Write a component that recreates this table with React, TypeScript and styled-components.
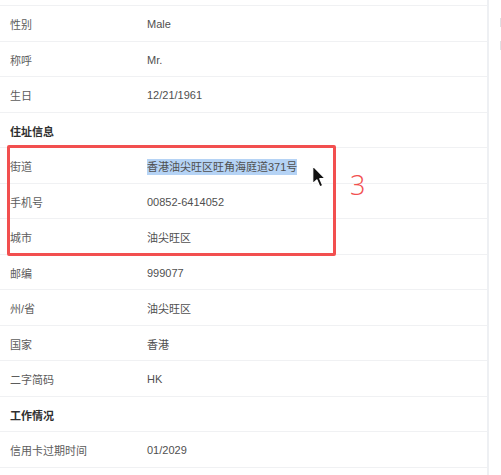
import * as React from 'react'
import styled, { createGlobalStyle } from 'styled-components'

type Row = {
  label: string
  value?: string
  header?: boolean
  selected?: boolean
}

const rows: Row[] = [
  { label: '性别', value: 'Male' },
  { label: '称呼', value: 'Mr.' },
  { label: '生日', value: '12/21/1961' },
  { label: '住址信息', header: true },
  { label: '街道', value: '香港油尖旺区旺角海庭道371号', selected: true },
  { label: '手机号', value: '00852-6414052' },
  { label: '城市', value: '油尖旺区' },
  { label: '邮编', value: '999077' },
  { label: '州/省', value: '油尖旺区' },
  { label: '国家', value: '香港' },
  { label: '二字简码', value: 'HK' },
  { label: '工作情况', header: true },
  { label: '信用卡过期时间', value: '01/2029' },
]

const GlobalStyle = createGlobalStyle`
  html, body {
    margin: 0;
    padding: 0;
    background: #fff;
    overflow: hidden;
  }
  body {
    font-family: "Liberation Sans", "Noto Sans CJK SC", sans-serif;
  }
`

const Page = styled.div`
  display: flex;
  width: 501px;
  height: 475px;
  overflow: hidden;
`

const Table = styled.div`
  position: relative;
  width: 487px;
  flex: none;
  border-right: 2px solid #eef0f3;
`

const TopEdge = styled.div`
  height: 5px;
  border-bottom: 1px solid #f0f1f3;
`

const RowBox = styled.div`
  display: flex;
  align-items: center;
  height: 35.5px;
  box-sizing: border-box;
  border-bottom: 1px solid #f0f1f3;
  padding: 2px 0 0 10px;
`

const Label = styled.div<{ $header?: boolean }>`
  width: 137px;
  flex: none;
  font-size: 11px;
  font-weight: ${(p) => (p.$header ? 700 : 400)};
  color: ${(p) => (p.$header ? '#2f2f2f' : '#5c5c5c')};
`

const Value = styled.div`
  font-size: 11px;
  color: #4f4f4f;
`

const Selected = styled.span`
  background: #b5d3f5;
  padding: 2px 0;
`

const Highlight = styled.div`
  position: absolute;
  left: 7px;
  top: 145px;
  width: 329px;
  height: 111px;
  box-sizing: border-box;
  border: 3px solid #f24f4f;
  border-radius: 2px;
`

const StepNumber = styled.div`
  position: absolute;
  left: 350px;
  top: 168px;
  font-family: "Open Sans", sans-serif;
  font-weight: 300;
  font-size: 27px;
  line-height: 34px;
  color: #f24f4f;
`

const Cursor = styled.svg`
  position: absolute;
  left: 311px;
  top: 164px;
`

const SideStrip = styled.div`
  flex: 1;
  display: flex;
  flex-direction: column;
  gap: 14px;
  padding: 18px 0 0 11px;
`

const SideMark = styled.div`
  width: 2px;
  height: 9px;
  background: #dfe1e4;
`

export default function App() {
  return (
    <Page>
      <GlobalStyle />
      <Table>
        <TopEdge />
        {rows.map((r) => (
          <RowBox key={r.label}>
            <Label $header={r.header}>{r.label}</Label>
            {r.value && (
              <Value>{r.selected ? <Selected>{r.value}</Selected> : r.value}</Value>
            )}
          </RowBox>
        ))}
        <Highlight />
        <StepNumber>3</StepNumber>
        <Cursor width="16" height="26" viewBox="0 0 14 22">
          <path
            d="M1.5 1.2 L1.5 16.8 L5.1 13.5 L7.7 19.6 L10.3 18.5 L7.7 12.5 L12.4 12.3 Z"
            fill="#111"
            stroke="#fff"
            strokeWidth="1.1"
            strokeLinejoin="round"
          />
        </Cursor>
      </Table>
      <SideStrip>
        <SideMark />
        <SideMark />
      </SideStrip>
    </Page>
  )
}
